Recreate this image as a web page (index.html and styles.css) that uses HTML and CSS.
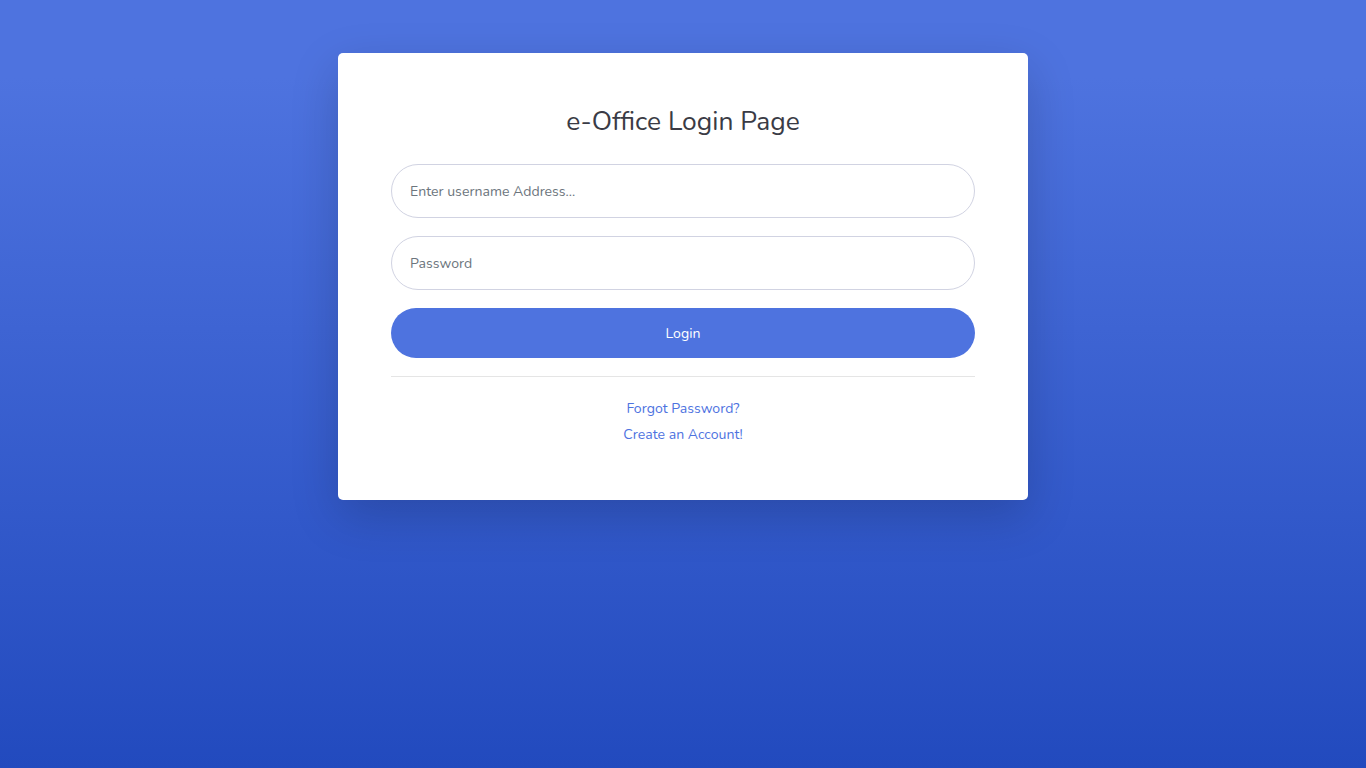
FILE: index.html
```html
<!DOCTYPE html>
<html lang="en">
<head>
<meta charset="utf-8">
<title>e-Office Login Page</title>
<link rel="stylesheet" href="styles.css">
</head>
<body class="page">
  <div class="container">
    <div class="card">
      <h1 class="title">e-Office Login Page</h1>
      <form class="form">
        <div class="group">
          <input class="field" type="text" placeholder="Enter username Address...">
        </div>
        <div class="group">
          <input class="field" type="password" placeholder="Password">
        </div>
        <button class="btn" type="button">Login</button>
      </form>
      <hr class="divider">
      <div class="links">
        <a class="link" href="#">Forgot Password?</a>
        <a class="link" href="#">Create an Account!</a>
      </div>
    </div>
  </div>
</body>
</html>
```
FILE: styles.css
```css
html, body {
  margin: 0;
  padding: 0;
}
.page {
  min-height: 100vh;
  background: linear-gradient(180deg, #4e73df 10%, #224abe 100%);
  font-family: "Nunito", "Open Sans", "Noto Sans", sans-serif;
  color: #858796;
}
.container {
  display: flex;
  justify-content: center;
  padding-top: 53px;
}
.card {
  width: 690px;
  box-sizing: border-box;
  background: #fff;
  border-radius: 5px;
  box-shadow: 0 1rem 3rem rgba(0, 0, 0, 0.175);
  padding: 52px 53px 55px;
  display: flex;
  flex-direction: column;
}
.title {
  margin: 0 0 27px;
  text-align: center;
  font-size: 26.4px;
  font-weight: 400;
  line-height: 32px;
  color: #3a3b45;
}
.form {
  display: flex;
  flex-direction: column;
}
.group {
  margin-bottom: 18px;
}
.field {
  display: block;
  width: 100%;
  box-sizing: border-box;
  height: 54px;
  border: 1px solid #d1d3e2;
  border-radius: 10rem;
  padding: 0 18px;
  font-family: inherit;
  font-size: 14.08px;
  color: #6e707e;
  outline: none;
}
.field::placeholder {
  color: #6c757d;
  opacity: 1;
}
.btn {
  height: 50px;
  border: none;
  border-radius: 10rem;
  background: #4e73df;
  color: #fff;
  font-family: inherit;
  font-size: 14.08px;
  cursor: pointer;
}
.divider {
  margin: 18px 0 22px;
  border: 0;
  border-top: 1px solid rgba(0, 0, 0, 0.1);
}
.links {
  display: flex;
  flex-direction: column;
  align-items: center;
  gap: 6px;
}
.link {
  font-size: 14.08px;
  line-height: 20px;
  color: #4e73df;
  text-decoration: none;
}
```
